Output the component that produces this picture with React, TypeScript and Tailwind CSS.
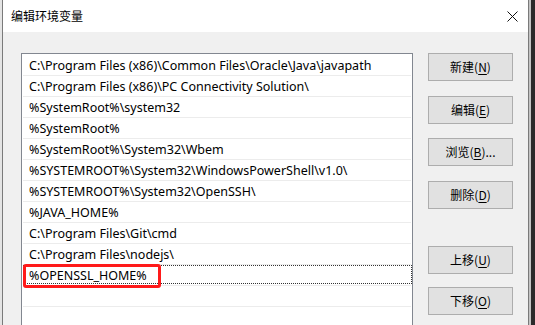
import React from "react";

const rows = [
  "C:\\Program Files (x86)\\Common Files\\Oracle\\Java\\javapath",
  "C:\\Program Files (x86)\\PC Connectivity Solution\\",
  "%SystemRoot%\\system32",
  "%SystemRoot%",
  "%SystemRoot%\\System32\\Wbem",
  "%SYSTEMROOT%\\System32\\WindowsPowerShell\\v1.0\\",
  "%SYSTEMROOT%\\System32\\OpenSSH\\",
  "%JAVA_HOME%",
  "C:\\Program Files\\Git\\cmd",
  "C:\\Program Files\\nodejs\\",
];

const font = { fontFamily: '"Noto Sans", "Noto Sans CJK SC", sans-serif' };

function Btn({ label, k, suffix = "", mt }: { label: string; k: string; suffix?: string; mt: string }) {
  return (
    <div
      className={`h-[28px] w-[85px] shrink-0 border border-[#adadad] bg-[#e1e1e1] flex items-center justify-center text-[12px] text-black ${mt}`}
    >
      <span>
        {label}(<span className="underline underline-offset-2">{k}</span>){suffix}
      </span>
    </div>
  );
}

export default function App() {
  return (
    <div className="w-[535px] h-[325px] overflow-hidden flex bg-[#2b2b2b]" style={font}>
      <div className="w-[2px] h-full bg-[#e4e4e4]" />
      <div className="w-[527px] h-full flex flex-col border-l border-r border-[#7a7a7a] overflow-hidden">
        <div className="h-[32px] shrink-0 bg-white flex items-center justify-between pl-[8px] pr-[10px]">
          <span className="text-[12px] text-black" style={{ fontFamily: '"Noto Sans CJK SC", sans-serif' }}>
            编辑环境变量
          </span>
          <svg width="11" height="11" viewBox="0 0 11 11" className="mt-px">
            <path d="M0.5 0.5 L10.5 10.5 M10.5 0.5 L0.5 10.5" stroke="#111" strokeWidth="1" />
          </svg>
        </div>
        <div className="flex-1 min-h-0 bg-[#f0f0f0] flex items-start pl-[18px] pt-[21px]">
          <div className="w-[392px] h-[300px] shrink-0 bg-white border border-[#828790] pt-px px-px flex flex-col">
            {rows.map((r, i) => (
              <div
                key={i}
                className="h-[21px] shrink-0 border-b border-[#ececec] flex items-center pl-[6px] pt-[2px] text-[12.5px] text-black whitespace-nowrap"
              >
                {r}
              </div>
            ))}
            <div className="relative h-[21px] shrink-0 border-b border-[#ececec]">
              <div className="absolute left-0 right-[-1px] top-0 bottom-px border border-dotted border-[#333]" />
              <div className="absolute left-0 top-[-1px] w-[138px] h-[24px] border-[3px] border-[#ff1a1a] rounded-[3px]" />
              <div className="absolute inset-0 flex items-center pl-[6px] pt-[2px] text-[12.5px] text-black">%OPENSSL_HOME%</div>
            </div>
            <div className="h-[21px] shrink-0 border-b border-[#ececec]" />
          </div>
          <div className="ml-[15px] flex flex-col" style={{ fontFamily: '"Noto Sans CJK SC", sans-serif' }}>
            <Btn label="新建" k="N" mt="mt-0" />
            <Btn label="编辑" k="E" mt="mt-[15px]" />
            <Btn label="浏览" k="B" suffix="..." mt="mt-[14px]" />
            <Btn label="删除" k="D" mt="mt-[15px]" />
            <Btn label="上移" k="U" mt="mt-[37px]" />
            <Btn label="下移" k="O" mt="mt-[13px]" />
          </div>
        </div>
      </div>
      <div className="w-[2px] h-full bg-[#c4c4c4]" />
    </div>
  );
}
